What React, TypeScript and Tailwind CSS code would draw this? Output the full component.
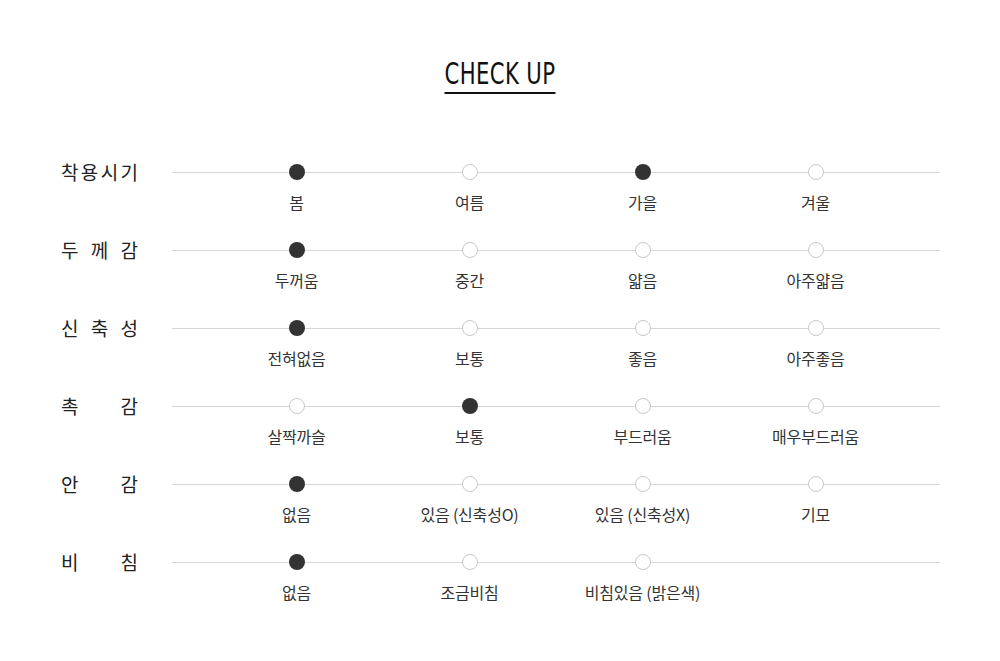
import React from 'react';

type Row = {
  label: string[];
  options: string[];
  checked: number[];
};

const rows: Row[] = [
  { label: ['착', '용', '시', '기'], options: ['봄', '여름', '가을', '겨울'], checked: [0, 2] },
  { label: ['두', '께', '감'], options: ['두꺼움', '중간', '얇음', '아주얇음'], checked: [0] },
  { label: ['신', '축', '성'], options: ['전혀없음', '보통', '좋음', '아주좋음'], checked: [0] },
  { label: ['촉', '감'], options: ['살짝까슬', '보통', '부드러움', '매우부드러움'], checked: [1] },
  { label: ['안', '감'], options: ['없음', '있음 (신축성O)', '있음 (신축성X)', '기모'], checked: [0] },
  { label: ['비', '침'], options: ['없음', '조금비침', '비침있음 (밝은색)'], checked: [0] },
];

const kr = { fontFamily: '"Noto Sans CJK KR", "Noto Sans", sans-serif' };

function Dot({ on }: { on: boolean }) {
  return on ? (
    <span className="block h-4 w-4 rounded-full bg-[#333333]" />
  ) : (
    <span className="block h-4 w-4 rounded-full border border-[#c8c8c8] bg-white" />
  );
}

export default function App() {
  return (
    <div className="w-[1000px] h-[661px] bg-white" style={kr}>
      <div className="flex justify-center pt-[56px]">
        <h1
          className="inline-block origin-center scale-x-[0.76] border-b-2 border-[#111] pb-[2px] text-[31px] leading-[34px] font-normal text-[#111] tracking-[0.5px]"
          style={{ fontFamily: '"DejaVu Sans Condensed", "DejaVu Sans", sans-serif' }}
        >
          CHECK UP
        </h1>
      </div>

      <div className="mt-[70px] flex flex-col pl-[61px] pr-[60px]">
        {rows.map((row, i) => (
          <div key={i} className="flex h-[78px] items-start">
            <div className="flex h-4 w-[77px] items-center justify-between text-[19px] text-[#222]">
              {row.label.map((c, j) => (
                <span key={j}>{c}</span>
              ))}
            </div>
            <div className="relative ml-[34px] flex flex-1 pl-[38px]">
              <div className="absolute left-0 right-0 top-[7.5px] h-px bg-[#d6d6d6]" />
              {row.options.map((opt, j) => (
                <div key={j} className="relative flex w-[173px] flex-col items-center">
                  <Dot on={row.checked.includes(j)} />
                  <span className="mt-[12px] text-[16px] leading-5 tracking-[-0.2px] text-[#333] whitespace-nowrap">
                    {opt}
                  </span>
                </div>
              ))}
            </div>
          </div>
        ))}
      </div>
    </div>
  );
}
